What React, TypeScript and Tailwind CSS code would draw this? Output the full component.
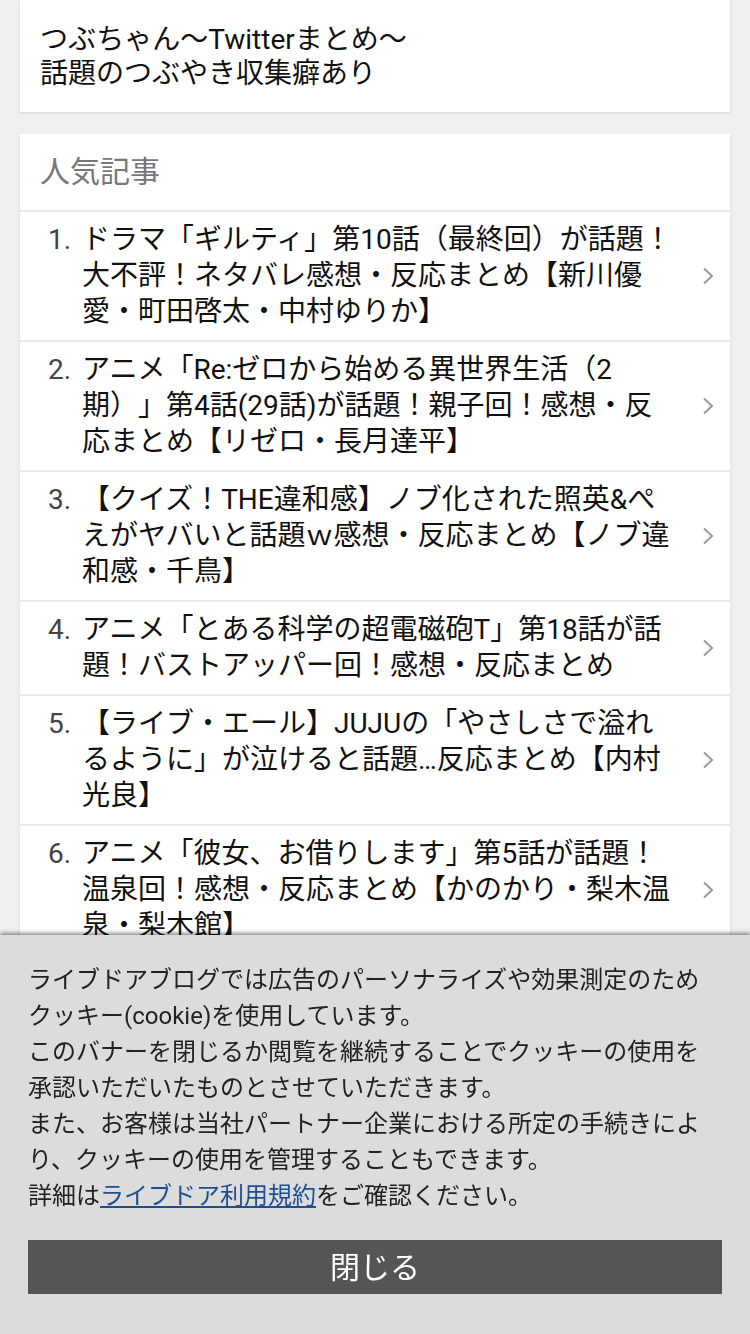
import React from "react";

const articles = [
  "ドラマ「ギルティ」第10話（最終回）が話題！大不評！ネタバレ感想・反応まとめ【新川優愛・町田啓太・中村ゆりか】",
  "アニメ「Re:ゼロから始める異世界生活（2期）」第4話(29話)が話題！親子回！感想・反応まとめ【リゼロ・長月達平】",
  "【クイズ！THE違和感】ノブ化された照英&ぺえがヤバいと話題ｗ感想・反応まとめ【ノブ違和感・千鳥】",
  "アニメ「とある科学の超電磁砲T」第18話が話題！バストアッパー回！感想・反応まとめ",
  "【ライブ・エール】JUJUの「やさしさで溢れるように」が泣けると話題…反応まとめ【内村光良】",
  "アニメ「彼女、お借りします」第5話が話題！温泉回！感想・反応まとめ【かのかり・梨木温泉・梨木館】",
];

function Chevron() {
  return (
    <svg width="12" height="18" viewBox="0 0 12 18" fill="none">
      <polyline points="2,1.5 10,9 2,16.5" stroke="#9a9a9a" strokeWidth="2" />
    </svg>
  );
}

export default function App() {
  return (
    <div
      className="min-h-screen bg-[#efefef] pb-[420px] text-[#111] [text-spacing-trim:space-all]"
      style={{ fontFamily: 'Roboto, "Noto Sans CJK JP", sans-serif' }}
    >
      {/* Blog title */}
      <div className="mx-[20px] bg-white px-[20px] pt-[23px] pb-[21px] text-[28px] leading-[34px] shadow-[0_1px_2px_rgba(0,0,0,0.12)]">
        つぶちゃん～Twitterまとめ～
        <br />
        話題のつぶやき収集癖あり
      </div>

      {/* Popular articles */}
      <div className="mx-[20px] mt-[22px] bg-[#e9e9e9] shadow-[0_1px_2px_rgba(0,0,0,0.12)]">
        <div className="bg-white px-[20px] py-[20px] text-[30px] leading-[36px] text-[#777]">
          人気記事
        </div>
        <ol className="mt-[2px] flex flex-col gap-[2px]">
          {articles.map((title, i) => (
            <li key={i} className="flex items-center bg-white py-[10px] pl-[28px]">
              <span className="w-[34px] shrink-0 self-start text-[28px] leading-[36px] text-[#444]">
                {i + 1}.
              </span>
              <span className="w-[594px] text-[28px] leading-[36px]">{title}</span>
              <span className="flex w-[54px] shrink-0 pl-[26px]">
                <Chevron />
              </span>
            </li>
          ))}
        </ol>
      </div>

      {/* Cookie banner */}
      <div className="fixed bottom-0 left-0 right-0 h-[399px] bg-[#dcdcdc] px-[28px] pt-[27px] shadow-[0_-2px_4px_rgba(0,0,0,0.45)]">
        <p className="text-[24px] leading-[36px] text-[#222]">
          ライブドアブログでは広告のパーソナライズや効果測定のためクッキー(cookie)を使用しています。
          <br />
          このバナーを閉じるか閲覧を継続することでクッキーの使用を承認いただいたものとさせていただきます。
          <br />
          また、お客様は当社パートナー企業における所定の手続きにより、クッキーの使用を管理することもできます。
          <br />
          詳細は
          <a href="#" className="text-[#1d4f91] underline">
            ライブドア利用規約
          </a>
          をご確認ください。
        </p>
        <button className="mt-[26px] flex h-[54px] w-full items-center justify-center bg-[#555] text-[30px] text-white">
          閉じる
        </button>
      </div>
    </div>
  );
}
